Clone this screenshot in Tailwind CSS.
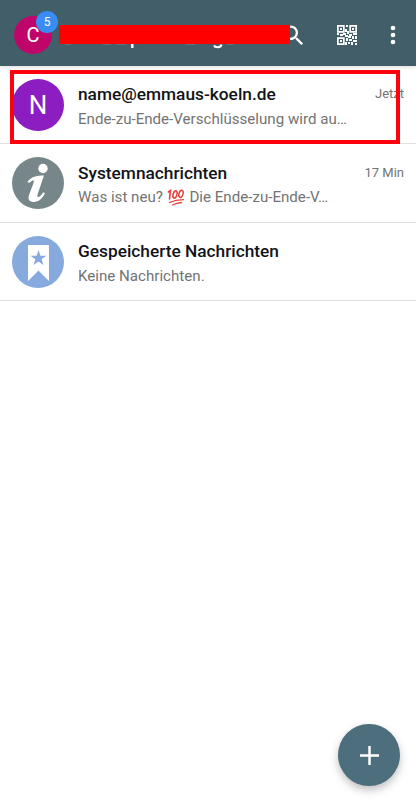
<!DOCTYPE html>
<html lang="de"><head><meta charset="utf-8"><title>Chats</title>
<script src="https://cdn.jsdelivr.net/npm/@tailwindcss/browser@4"></script></head>
<body class="relative w-[416px] h-[803px] overflow-hidden bg-white font-[Roboto,sans-serif]">
<header class="h-[66px] bg-[#425e69] flex items-center pt-1 pl-[14px] pr-[16px] shadow-[0_1px_4px_rgba(0,0,0,0.15)]">
  <div class="relative size-[38px] shrink-0 rounded-full bg-[#c0056a] text-white text-[20px] leading-[38px] text-center">C
    <span class="absolute left-[22px] -top-[5px] size-[22px] rounded-full bg-[#3a8cf5] text-[12px] leading-[22px]">5</span>
  </div>
  <div class="relative z-10 ml-[7px] mb-px w-[231px] h-[19px] bg-[#ff0000] shrink-0">
    <svg class="absolute left-0 top-[19px]" width="231" height="6" fill="none" stroke="#fff"><path d="M6 .4h6M44 .4h8M57 .4h10M127 .4h9M168 .4h7" stroke-opacity=".2" stroke-width=".8"/><path d="M73.300 0v4" stroke-width="2.400"/><path d="M155 1.500c1 2.200 7 2.500 7.500-1" stroke-width="2"/></svg>
  </div>
  <svg class="-ml-[10px] size-[27px] shrink-0" viewBox="0 0 24 24" fill="#fff"><path d="M15.500 14h-.79l-.28-.27A6.470 6.470 0 0 0 16 9.500 6.500 6.500 0 1 0 9.500 16c1.610 0 3.090-.59 4.230-1.570l.27.280v.79l5 4.990L20.490 19zM9.500 14a4.500 4.500 0 1 1 0-9 4.500 4.500 0 0 1 0 9z"/></svg>
  <svg class="ml-[30px] size-[20px] shrink-0" viewBox="0 0 20 20" fill="none" stroke="#fff" stroke-width="1.700"><path d="M.85.85h6v6h-6zM13.150.85h6v6h-6zM.85 13.150h6v6h-6z"/><path d="M3 3h2v2H3zM15 3h2v2h-2zM3 15h2v2H3zM9 0h2v2H9zM8 4h2v3H8zM10 6h2v3h-2zM0 8h2v2H0zM3 9h3v2H3zM6 8h3v2H6zM8 10h3v2H8zM12 9h3v2h-3zM16 8h4v2h-4zM9 13h2v3H9zM11 11h3v2h-3zM15 11h2v3h-2zM18 11h2v3h-2zM12 14h3v2h-3zM8 17h2v3H8zM11 17h2v2h-2zM14 17h2v3h-2zM16 15h4v2h-4zM18 18h2v2h-2z" fill="#fff" stroke="none"/></svg>
  <svg class="ml-auto w-[14px] h-[20px]" viewBox="0 0 14 20" fill="#fff"><circle cx="7" cy="3" r="2.300"/><circle cx="7" cy="10" r="2.300"/><circle cx="7" cy="17" r="2.300"/></svg>
</header>
<main>
  <section class="h-[78px] border-b border-[#e0e0e0] flex items-center pl-3 pr-3">
    <div class="size-[52px] shrink-0 rounded-full bg-[#8c1dc1] text-white text-[26px] leading-[52px] text-center">N</div>
    <div class="ml-[14px] pt-[6px] flex-1 min-w-0">
      <div class="flex items-center justify-between"><h2 class="text-[17.300px] leading-[24px] font-medium text-[#111318] whitespace-nowrap">name@emmaus-koeln.de</h2><time class="text-[13px] text-[#737373]">Jetzt</time></div>
      <p class="text-[15.120px] leading-[27px] text-[#737373] whitespace-nowrap">Ende-zu-Ende-Verschlüsselung wird au…</p>
    </div>
  </section>
  <section class="h-[79px] border-b border-[#e0e0e0] flex items-center pl-3 pr-3">
    <svg class="size-[52px] shrink-0" viewBox="0 0 52 52"><circle cx="26" cy="26" r="26" fill="#768689"/><circle cx="31" cy="11.500" r="4.700" fill="#fff"/><path d="M15.500 24.500c4-4.500 8.500-6 16.500-6L25.700 37c-.7 2.300-.4 3.200.6 3 2-.2 3.500-2.500 5-4.700l1.700 1c-3 5.500-6.500 8.700-11 8.700-4.500 0-6.500-2.500-5-7L21.500 26c.7-2 .2-3-1-2.500L17 26z" fill="#fff"/></svg>
    <div class="ml-[14px] pt-[5px] flex-1 min-w-0">
      <div class="flex items-center justify-between"><h2 class="text-[17.300px] leading-[24px] font-medium text-[#111318] whitespace-nowrap">Systemnachrichten</h2><time class="text-[13px] text-[#737373]">17 Min</time></div>
      <p class="text-[15.120px] leading-[25px] text-[#737373] whitespace-nowrap">Was ist neu? <svg class="inline-block w-[19px] h-[17px] -mt-[2px]" viewBox="0 0 18 17" fill="none" stroke="#e8403c" stroke-linecap="round"><path d="M1 3l2-1.500L2 10" stroke-width="1.600"/><ellipse cx="7.500" cy="5.500" rx="1.900" ry="3.700" transform="rotate(16 7.500 5.500)" stroke-width="1.500"/><ellipse cx="13.500" cy="4.800" rx="2" ry="3.700" transform="rotate(16 13.500 4.800)" stroke-width="1.500"/><path d="M2 13.500Q8 11 16 10.700M5 16Q9 14 14 13.500" stroke-width="1.300"/></svg> Die Ende-zu-Ende-V…</p>
    </div>
  </section>
  <section class="h-[78px] border-b border-[#e0e0e0] flex items-center pl-3 pr-3">
    <svg class="size-[52px] shrink-0" viewBox="0 0 52 52"><circle cx="26" cy="26" r="26" fill="#87aade"/><path d="M16 9h21v36L26.500 34.500 16 45z" fill="#fff"/><path d="M26.500 14l1.900 5.700h6l-4.800 3.600 1.800 5.700-4.900-3.500-4.900 3.500 1.800-5.700-4.800-3.600h6z" fill="#87aade"/></svg>
    <div class="ml-[14px] pt-[6px] flex-1 min-w-0">
      <h2 class="text-[17.300px] leading-[24px] font-medium text-[#111318] whitespace-nowrap">Gespeicherte Nachrichten</h2>
      <p class="text-[15.120px] leading-[27px] text-[#737373]">Keine Nachrichten.</p>
    </div>
  </section>
</main>
<div class="absolute left-[10px] top-[70px] w-[390px] h-[74px] border-4 border-[#ff000c]"></div>
<button class="absolute left-[338px] top-[724px] size-[62px] rounded-full bg-[#4d6e7c] shadow-[0_4px_9px_rgba(0,0,0,0.25)] flex items-center justify-center" aria-label="Neu"><svg class="size-[19px]" viewBox="0 0 20 20" stroke="#fff" stroke-width="2.600"><path d="M10 0v20M0 10h20"/></svg></button>
</body></html>
